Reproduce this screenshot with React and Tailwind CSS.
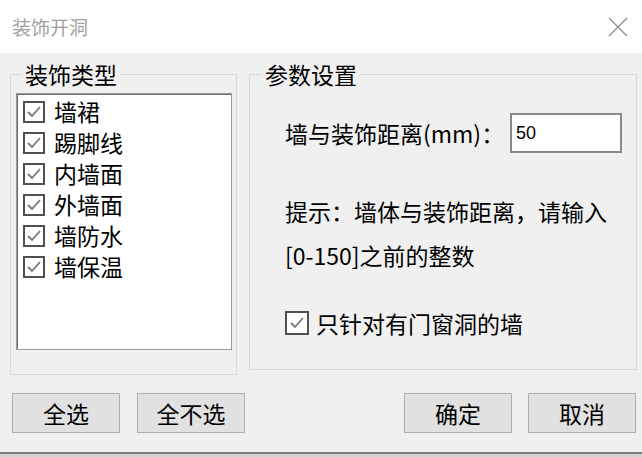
import React, { useState } from 'react';

const FONT = { fontFamily: '"Noto Sans CJK SC", "Noto Sans", sans-serif' };

// classic win32 style checkbox: dark frame, grey tick
const CheckBox = ({ checked, size = 'w-[22px] h-[22px]' }) => (
  <span className={`${size} shrink-0 bg-white border-2 border-[#505050] flex items-center justify-center`}>
    {checked && (
      <svg width="16" height="16" viewBox="0 0 16 16">
        <path d="M2 8 L6 12 L14 3" fill="none" stroke="#777" strokeWidth="1.8" />
      </svg>
    )}
  </span>
);

const WinButton = ({ children }) => (
  <button className="w-[108px] h-[40px] bg-[#e1e1e1] border border-[#adadad] text-[23px] text-black leading-none">
    {children}
  </button>
);

export default function App() {
  const [types] = useState(['墙裙', '踢脚线', '内墙面', '外墙面', '墙防水', '墙保温']);

  return (
    <div className="w-[642px] h-[457px] bg-[#f0f0f0] flex flex-col overflow-hidden text-black" style={FONT}>
      {/* Title bar */}
      <div className="h-[53px] bg-white flex items-center justify-between pl-[12px] pr-[14px]">
        <span className="text-[19px] text-[#a0a0a0] leading-none">装饰开洞</span>
        <svg width="20" height="20" viewBox="0 0 20 20">
          <path d="M1 1 L19 19 M19 1 L1 19" stroke="#8a8a8a" strokeWidth="1.2" />
        </svg>
      </div>

      {/* Body */}
      <div className="h-[399px] flex flex-col pt-[7px]">
        <div className="flex items-start pl-[10px] gap-[12px]">
          {/* 装饰类型 */}
          <fieldset className="w-[227px] h-[315px] border border-[#d9d9d9] pl-[5px] pr-[4px]">
            <legend className="ml-[6px] px-[3px] text-[23px] leading-[28px]">装饰类型</legend>
            <div className="mt-[5px] h-[257px] bg-white border border-[#9a9a9a] shadow-[inset_1px_1px_0_#6e6e6e] pt-[2px] pl-[6px]">
              {types.map((t) => (
                <div key={t} className="h-[31px] flex items-center gap-[9px]">
                  <CheckBox checked />
                  <span className="text-[23px] leading-none">{t}</span>
                </div>
              ))}
            </div>
          </fieldset>

          {/* 参数设置 */}
          <fieldset className="w-[388px] h-[310px] border border-[#d9d9d9] pl-[35px]">
            <legend className="ml-[-23px] px-[3px] text-[23px] leading-[28px]">参数设置</legend>
            <div className="mt-[25px] flex items-center">
              <span className="w-[225px] text-[23px] leading-none whitespace-nowrap">
                墙与装饰距离(mm)：
              </span>
              <div className="w-[112px] h-[40px] bg-white border-2 border-[#8a8a8a] flex items-center pl-[4px]">
                <span className="text-[18px] leading-none" style={{ fontFamily: '"Liberation Sans", Arial, sans-serif' }}>
                  50
                </span>
              </div>
            </div>
            <div className="mt-[36px] text-[23px] leading-[44px] whitespace-nowrap">
              <div>提示：墙体与装饰距离，请输入</div>
              <div>[0-150]之前的整数</div>
            </div>
            <div className="mt-[34px] flex items-center gap-[7px]">
              <CheckBox checked size="w-[24px] h-[24px]" />
              <span className="text-[23px] leading-none">只针对有门窗洞的墙</span>
            </div>
          </fieldset>
        </div>

        {/* Buttons */}
        <div className="mt-[18px] flex justify-between pl-[12px] pr-[6px]">
          <div className="flex gap-[17px]">
            <WinButton>全选</WinButton>
            <WinButton>全不选</WinButton>
          </div>
          <div className="flex gap-[16px]">
            <WinButton>确定</WinButton>
            <WinButton>取消</WinButton>
          </div>
        </div>
      </div>

      <div className="h-[5px] border-t-2 border-[#7a7a7a] bg-[#d4d4d4]" />
    </div>
  );
}
